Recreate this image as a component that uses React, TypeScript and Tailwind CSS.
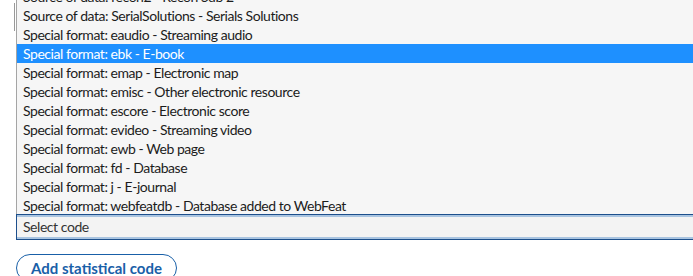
const options = [
  'Source of data: recon2 - Recon Sub 2',
  'Source of data: SerialSolutions - Serials Solutions',
  'Special format: eaudio - Streaming audio',
  'Special format: ebk - E-book',
  'Special format: emap - Electronic map',
  'Special format: emisc - Other electronic resource',
  'Special format: escore - Electronic score',
  'Special format: evideo - Streaming video',
  'Special format: ewb - Web page',
  'Special format: fd - Database',
  'Special format: j - E-journal',
  'Special format: webfeatdb - Database added to WebFeat',
]

export default function App() {
  return (
    <div className="relative w-[693px] h-[276px] overflow-hidden bg-white font-['Lato',sans-serif]">
      {/* native select edge behind the popup */}
      <div className="absolute left-[14px] top-[3px] h-[28px] w-[2px] border-l border-[#999]" />

      <div className="pl-4">
        {/* Options popup */}
        <div className="-mt-[13px] w-[700px] border-l border-[#a5a5a5] bg-[#f6f6f6]">
          {options.map((o) => (
            <div
              key={o}
              className={
                'h-[19px] pl-[6px] text-[14px] tracking-[-0.45px] leading-[19px] whitespace-nowrap ' +
                (o.includes('ebk') ? 'bg-[#1e90ff] text-white' : 'text-[#1c1c1c]')
              }
            >
              {o}
            </div>
          ))}
        </div>

        {/* Select */}
        <div className="-mt-px h-[26px] w-[700px] border border-[#1d4f8c] bg-[#f3f3f3] pl-[6px] text-[14px] tracking-[-0.45px] leading-[23px] text-[#333] shadow-[inset_0_2px_0_#a9c4e0,inset_0_-2px_0_#a9c4e0]">
          Select code
        </div>

        {/* Add button */}
        <button className="mt-[14px] h-[28px] w-[161px] rounded-full border border-[#1960a8] bg-white text-[15px] font-bold leading-[26px] text-[#1960a8]">
          Add statistical code
        </button>
      </div>
    </div>
  )
}
